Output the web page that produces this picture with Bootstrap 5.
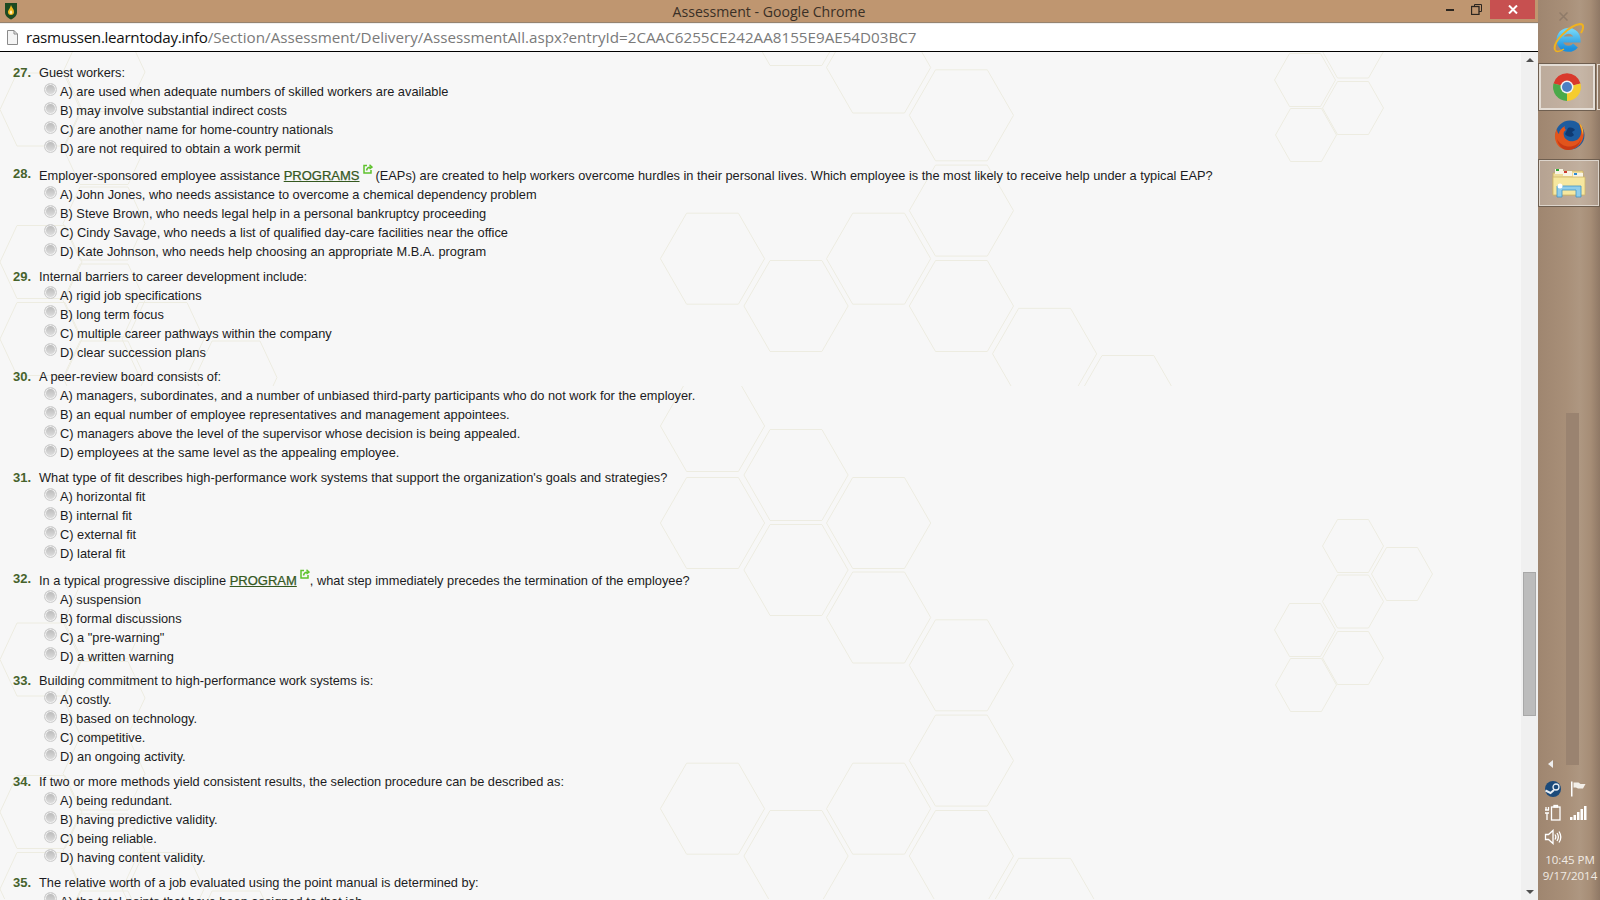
<!DOCTYPE html>
<html lang="en">
<head>
  <meta charset="UTF-8" />
  <title>Assessment - Google Chrome</title>
  <link href="https://cdn.jsdelivr.net/npm/bootstrap@5.3.2/dist/css/bootstrap.min.css" rel="stylesheet">
  <style>
    html, body { height: 100%; overflow: hidden; }
    body { background: #a68c75; font-family: "Liberation Sans", Arial, sans-serif; }

    .win-main { width: 1538px; height: 900px; }
    .title-strip {
      display: grid; grid-template-columns: 1fr auto 1fr; align-items: center;
      height: 23px; background: #bf9670; border-bottom: 1px solid #96836f;
      font-family: "Open Sans", sans-serif; font-size: 14.1px; color: #3a3026;
    }
    .title-text { padding-top: 1px; }
    .win-btn { width: 27px; height: 19px; }
    .win-close { width: 45px; height: 19px; background: #c75050; margin: 0 3px 3px 0; }
    .addr-strip {
      height: 30px; background: #fff; border-top: 1px solid #efefef; border-bottom: 1px solid #000;
      padding-left: 6px; font-family: "Open Sans", sans-serif; font-size: 15.2px; color: #7a7a7a;
    }
    .addr-doc { margin-right: 7px; }
    .addr-host { color: #111; letter-spacing: -.3px; }

    .sheet { background: #f7f7f7; }
    .hex-bg { position: absolute; left: 0; top: 0; }
    .q-list { position: relative; padding: 11px 0 0 13px; font-size: 12.8px; color: #1b1b22; line-height: 19px; white-space: nowrap; }
    .q-item { display: flex; margin-bottom: 5.67px; }
    .q-num { width: 26px; flex: none; font-size: 13px; font-weight: 700; color: #46632c; }
    .q-opt { display: flex; padding-left: 5px; height: 19px; }
    .q-radio {
      appearance: none; width: 13px; height: 13px; margin: 0 3px 0 0; flex: none; position: relative; top: .5px;
      border: 1px solid #cdcdcd; border-radius: 50%;
      background: linear-gradient(#b8b8b8, #e0e0e0);
      box-shadow: inset 0 0 0 1px #f0f0f0;
    }
    .term-link { color: #35581f; text-decoration: underline; font-size: 13px; -webkit-text-stroke: .25px #35581f; }
    .ext-ico { width: 10px; height: 10px; vertical-align: 6px; margin: 0 3px 0 3px; }
    .ext-tight { margin-right: 0; }

    .scroll-rail { width: 17px; background: #f0f0f0; }
    .scroll-up { border: 4px solid transparent; border-bottom: 4px solid #505050; border-top: 0; margin: 6px auto 0; width: 0; }
    .scroll-down { border: 4px solid transparent; border-top: 4px solid #505050; border-bottom: 0; margin: auto auto 6px; width: 0; }
    .scroll-thumb { width: 13px; height: 144px; margin: 510px 0 0 2px; background: #bcbcbc; border: 1px solid #a8a8a8; }

    .task-rail {
      width: 62px; height: 900px; color: #fff;
      background:
        linear-gradient(#9a8370, #9a8370) no-repeat 28px 413px / 13px 352px,
        linear-gradient(90deg, #9f8670 0, #a88f78 45%, #ae9781 68%, #a68d76 85%, #8f7865 100%);
      font-family: "Open Sans", sans-serif;
    }
    .task-slot { position: relative; display: flex; justify-content: center; align-items: center; }
    .task-ghost { height: 23px; padding: 9px 12px 0 0; }
    .task-ie { height: 41px; padding-bottom: 11px; }
    .task-on { height: 46px; width: 56px; margin-left: 1px; border: 2px solid #e4ddd5; outline: 1px solid #6f5f50; background: rgba(255,255,255,.3); }
    .task-ff { height: 50px; }
    .task-folder { height: 46px; width: 60px; margin-left: 1px; border: 1px solid #dcd4cb; outline: 1px solid #6f5f50; background: rgba(255,255,255,.24); }
    .sliver { position: absolute; left: 56px; top: -2px; width: 5px; height: 46px; border: 1px solid #e4ddd5; }
    .tray { margin-top: auto; padding: 0 0 16px 5px; }
    .tray-row { display: flex; gap: 7px; height: 24px; align-items: center; padding-left: 1px; }
    .tray-ico { width: 18px; height: 18px; }
    .tray-arrow { border: 4px solid transparent; border-right: 5px solid #eee; border-left: 0; width: 0; margin: 0 0 9px 5px; }
    .clock-text { font-size: 11.5px; line-height: 16px; text-align: center; margin: 3px 0 0 -3px; color: #f1ebe4; }
  </style>
</head>
<body class="d-flex">
  <div class="win-main d-flex flex-column">
    <div class="title-strip">
      <div class="ps-1 d-flex">
        <svg width="14" height="18" viewBox="0 0 14 18"><path d="M1 1h12v9c0 4-3 6-6 7.500C4 16 1 14 1 10z" fill="#1c4a22"/><path d="M7 3c1 3 3 4 3 7a3 3 0 0 1-6 0c0-2 2-3 3-7z" fill="#f1b81f"/><path d="M7 8c.5 1 1.300 1.500 1.300 2.600a1.300 1.300 0 0 1-2.600 0C5.700 9.600 6.500 9 7 8z" fill="#fff3c0"/></svg>
      </div>
      <div class="title-text">Assessment - Google Chrome</div>
      <div class="d-flex justify-content-end align-items-start">
        <div class="win-btn d-flex justify-content-center align-items-center">
          <svg width="10" height="4" viewBox="0 0 10 4"><rect x="1" y="1" width="8" height="2" fill="#2c2620"/></svg>
        </div>
        <div class="win-btn d-flex justify-content-center align-items-center">
          <svg width="11" height="11" viewBox="0 0 11 11" fill="none" stroke="#2c2620"><path d="M3.500 2.500V.5h7v7H8"/><rect x=".5" y="2.500" width="7.500" height="8" stroke-width="1.300"/></svg>
        </div>
        <div class="win-close d-flex justify-content-center align-items-center">
          <svg width="10" height="9" viewBox="0 0 10 9" stroke="#fff" stroke-width="2"><path d="M1 .5l8 8M9 .5l-8 8"/></svg>
        </div>
      </div>
    </div>
    <div class="addr-strip d-flex align-items-center">
      <svg class="addr-doc" width="13" height="15" viewBox="0 0 13 15" fill="#f4f4f4" stroke="#8a8a8a"><path d="M1.500.5h6.500l3.500 3.500v10.500h-10z"/><path d="M8 .5v3.500h3.500" fill="none"/></svg>
      <div><span class="addr-host">rasmussen.learntoday.info</span>/Section/Assessment/Delivery/AssessmentAll.aspx?entryId=2CAAC6255CE242AA8155E9AE54D03BC7</div>
    </div>
    <div class="d-flex flex-grow-1 overflow-hidden">
      <div class="sheet flex-grow-1 position-relative overflow-hidden">
        <svg class="hex-bg" width="1521" height="847" viewBox="0 53 1521 847" fill="none" stroke="#edecE1" stroke-width="1">
          <defs>
            <polygon id="hexA" points="-52.100,0 -25.900,-45.500 25.900,-45.500 52.100,0 25.900,45.500 -25.900,45.500"/>
            <polygon id="hexL" points="-41,0 -24,-36.500 24,-36.500 41,0 24,36.500 -24,36.500"/>
            <polygon id="hexS" points="-30.500,0 -15.500,-26.500 15.500,-26.500 30.500,0 15.500,26.500 -15.500,26.500"/>
            <pattern id="hexTile" patternUnits="userSpaceOnUse" x="0" y="-163" width="1521" height="550">
              <g transform="translate(0 164)">
                <use href="#hexL" x="41" y="109.500"/><use href="#hexL" x="41" y="262"/><use href="#hexL" x="41" y="339"/>
                <use href="#hexL" x="104" y="72"/><use href="#hexL" x="104" y="148"/><use href="#hexL" x="104" y="223.500"/>
                <use href="#hexL" x="104" y="300.500"/><use href="#hexL" x="104" y="377.500"/>
                <use href="#hexL" x="163" y="339"/><use href="#hexL" x="236" y="377.500"/>

                <use href="#hexA" x="712.500" y="-124"/><use href="#hexA" x="796" y="-75"/>
                <use href="#hexA" x="712.500" y="-27"/><use href="#hexA" x="878.600" y="-27"/>
                <use href="#hexA" x="796" y="20"/><use href="#hexA" x="878.600" y="67.500"/>
                <use href="#hexA" x="961.400" y="115.300"/><use href="#hexA" x="961.400" y="210.600"/>
                <use href="#hexA" x="712.500" y="258.700"/><use href="#hexA" x="878.600" y="258.700"/>
                <use href="#hexA" x="796" y="306"/><use href="#hexA" x="961.400" y="306"/>
                <use href="#hexA" x="1044.600" y="353.800"/><use href="#hexA" x="1127.900" y="401"/>

                <use href="#hexS" x="1353" y="-4"/><use href="#hexS" x="1402" y="24"/>
                <use href="#hexS" x="1353" y="51.500"/><use href="#hexS" x="1305" y="80"/>
                <use href="#hexS" x="1353" y="108"/><use href="#hexS" x="1306" y="135"/>
              </g>
            </pattern>
          </defs>
          <rect x="0" y="53" width="1521" height="847" fill="url(#hexTile)" stroke="none"/>
        </svg>

        <div class="q-list">
          <div class="q-item"><div class="q-num">27.</div><div>
            <div>Guest workers:</div>
            <div class="q-opt"><input type="radio" class="q-radio" name="q27"><span>A) are used when adequate numbers of skilled workers are available</span></div>
            <div class="q-opt"><input type="radio" class="q-radio" name="q27"><span>B) may involve substantial indirect costs</span></div>
            <div class="q-opt"><input type="radio" class="q-radio" name="q27"><span>C) are another name for home-country nationals</span></div>
            <div class="q-opt"><input type="radio" class="q-radio" name="q27"><span>D) are not required to obtain a work permit</span></div>
          </div></div>
          <div class="q-item"><div class="q-num">28.</div><div>
            <div>Employer-sponsored employee assistance <a class="term-link" href="#">PROGRAMS</a><svg class="ext-ico" viewBox="0 0 10 10" fill="none" stroke="#5fc22e" stroke-width="1.500"><path d="M4 1.500H1v7.500h7V6"/><path d="M3.500 6.500C4 4 5.500 3 8 3"/><path d="M6.500 .8L9 3 6.500 5" /></svg>(EAPs) are created to help workers overcome hurdles in their personal lives. Which employee is the most likely to receive help under a typical EAP?</div>
            <div class="q-opt"><input type="radio" class="q-radio" name="q28"><span>A) John Jones, who needs assistance to overcome a chemical dependency problem</span></div>
            <div class="q-opt"><input type="radio" class="q-radio" name="q28"><span>B) Steve Brown, who needs legal help in a personal bankruptcy proceeding</span></div>
            <div class="q-opt"><input type="radio" class="q-radio" name="q28"><span>C) Cindy Savage, who needs a list of qualified day-care facilities near the office</span></div>
            <div class="q-opt"><input type="radio" class="q-radio" name="q28"><span>D) Kate Johnson, who needs help choosing an appropriate M.B.A. program</span></div>
          </div></div>
          <div class="q-item"><div class="q-num">29.</div><div>
            <div>Internal barriers to career development include:</div>
            <div class="q-opt"><input type="radio" class="q-radio" name="q29"><span>A) rigid job specifications</span></div>
            <div class="q-opt"><input type="radio" class="q-radio" name="q29"><span>B) long term focus</span></div>
            <div class="q-opt"><input type="radio" class="q-radio" name="q29"><span>C) multiple career pathways within the company</span></div>
            <div class="q-opt"><input type="radio" class="q-radio" name="q29"><span>D) clear succession plans</span></div>
          </div></div>
          <div class="q-item"><div class="q-num">30.</div><div>
            <div>A peer-review board consists of:</div>
            <div class="q-opt"><input type="radio" class="q-radio" name="q30"><span>A) managers, subordinates, and a number of unbiased third-party participants who do not work for the employer.</span></div>
            <div class="q-opt"><input type="radio" class="q-radio" name="q30"><span>B) an equal number of employee representatives and management appointees.</span></div>
            <div class="q-opt"><input type="radio" class="q-radio" name="q30"><span>C) managers above the level of the supervisor whose decision is being appealed.</span></div>
            <div class="q-opt"><input type="radio" class="q-radio" name="q30"><span>D) employees at the same level as the appealing employee.</span></div>
          </div></div>
          <div class="q-item"><div class="q-num">31.</div><div>
            <div>What type of fit describes high-performance work systems that support the organization's goals and strategies?</div>
            <div class="q-opt"><input type="radio" class="q-radio" name="q31"><span>A) horizontal fit</span></div>
            <div class="q-opt"><input type="radio" class="q-radio" name="q31"><span>B) internal fit</span></div>
            <div class="q-opt"><input type="radio" class="q-radio" name="q31"><span>C) external fit</span></div>
            <div class="q-opt"><input type="radio" class="q-radio" name="q31"><span>D) lateral fit</span></div>
          </div></div>
          <div class="q-item"><div class="q-num">32.</div><div>
            <div>In a typical progressive discipline <a class="term-link" href="#">PROGRAM</a><svg class="ext-ico ext-tight" viewBox="0 0 10 10" fill="none" stroke="#5fc22e" stroke-width="1.500"><path d="M4 1.500H1v7.500h7V6"/><path d="M3.500 6.500C4 4 5.500 3 8 3"/><path d="M6.500 .8L9 3 6.500 5" /></svg>, what step immediately precedes the termination of the employee?</div>
            <div class="q-opt"><input type="radio" class="q-radio" name="q32"><span>A) suspension</span></div>
            <div class="q-opt"><input type="radio" class="q-radio" name="q32"><span>B) formal discussions</span></div>
            <div class="q-opt"><input type="radio" class="q-radio" name="q32"><span>C) a "pre-warning"</span></div>
            <div class="q-opt"><input type="radio" class="q-radio" name="q32"><span>D) a written warning</span></div>
          </div></div>
          <div class="q-item"><div class="q-num">33.</div><div>
            <div>Building commitment to high-performance work systems is:</div>
            <div class="q-opt"><input type="radio" class="q-radio" name="q33"><span>A) costly.</span></div>
            <div class="q-opt"><input type="radio" class="q-radio" name="q33"><span>B) based on technology.</span></div>
            <div class="q-opt"><input type="radio" class="q-radio" name="q33"><span>C) competitive.</span></div>
            <div class="q-opt"><input type="radio" class="q-radio" name="q33"><span>D) an ongoing activity.</span></div>
          </div></div>
          <div class="q-item"><div class="q-num">34.</div><div>
            <div>If two or more methods yield consistent results, the selection procedure can be described as:</div>
            <div class="q-opt"><input type="radio" class="q-radio" name="q34"><span>A) being redundant.</span></div>
            <div class="q-opt"><input type="radio" class="q-radio" name="q34"><span>B) having predictive validity.</span></div>
            <div class="q-opt"><input type="radio" class="q-radio" name="q34"><span>C) being reliable.</span></div>
            <div class="q-opt"><input type="radio" class="q-radio" name="q34"><span>D) having content validity.</span></div>
          </div></div>
          <div class="q-item"><div class="q-num">35.</div><div>
            <div>The relative worth of a job evaluated using the point manual is determined by:</div>
            <div class="q-opt"><input type="radio" class="q-radio" name="q35"><span>A) the total points that have been assigned to that job.</span></div>
          </div></div>
        </div>
      </div>
      <div class="scroll-rail d-flex flex-column">
        <div class="scroll-up"></div>
        <div class="scroll-thumb"></div>
        <div class="scroll-down"></div>
      </div>
    </div>
  </div>

  <div class="task-rail d-flex flex-column">
    <div class="task-slot task-ghost">
      <svg width="9" height="9" viewBox="0 0 9 9" stroke="#8f7b69" stroke-width="1.500"><path d="M.5.5l8 8M8.500.5l-8 8"/></svg>
    </div>
    <div class="task-slot task-ie">
      <svg width="32" height="32" viewBox="0 0 32 32" fill="none">
        <defs><linearGradient id="ieBlue" x1="0" y1="0" x2="0" y2="1"><stop offset="0" stop-color="#6fd3f7"/><stop offset="1" stop-color="#1c8fdc"/></linearGradient></defs>
        <path d="M7.500 17.500h17A9 9 0 1 0 22.500 23.500" stroke="url(#ieBlue)" stroke-width="6"/>
        <path d="M2 28C-1 20 17 3 27 2c4.500 0 3.500 5 1 9" stroke="#efb220" stroke-width="2"/>
        <path d="M2 28c2 3 6 1 9-1" stroke="#efb220" stroke-width="1.500"/>
      </svg>
    </div>
    <div class="task-slot task-on">
      <svg width="28" height="28" viewBox="0 0 28 28">
        <path d="M14 14L.5 10.500A14 14 0 0 1 27.500 10.500z" fill="#d9392c"/>
        <path d="M14 14L27.500 10.500A14 14 0 0 1 14 28z" fill="#f6cc2e"/>
        <path d="M14 14L14 28A14 14 0 0 1 .5 10.500z" fill="#4aa94a"/>
        <circle cx="14" cy="14" r="6.500" fill="#f2f2f2"/><circle cx="14" cy="14" r="5" fill="#4b7fc4"/>
      </svg>
      <div class="sliver"></div>
    </div>
    <div class="task-slot task-ff">
      <svg width="31" height="31" viewBox="0 0 31 31">
        <circle cx="16" cy="15" r="14.500" fill="#1d5c9f"/>
        <path d="M14 8c3-1 6 0 7 2l-3 2 2 3c-2 3-7 2-9-1z" fill="#0f3a72"/>
        <path d="M25 3c5 5 6 12 3 18C24 29 14 32 7 28 1 24-1 15 3 9c0 3 1 4 2 5 0-3 2-6 6-8-1 2 0 3 1 4-2 1-3 3-2 6 1 4 6 6 10 5 5-1 8-6 7-11-.5-2-1-4-2-7z" fill="#e2541c"/>
        <path d="M3 19c3 6 10 9 16 7 4-1 7-4 8-8-1 8-7 12-13 12-6 0-10-5-11-11z" fill="#c93a14"/>
        <path d="M25 3c3 2 5 7 4 12-1-4-2-8-4-12z" fill="#f6b62c"/>
      </svg>
    </div>
    <div class="task-slot task-folder">
      <svg width="34" height="30" viewBox="0 0 34 30">
        <path d="M1 5h8l2-2h20v24H1z" fill="#efdc9a" stroke="#c9ad62" stroke-width=".8"/>
        <rect x="3" y="1" width="8" height="5" fill="#f8f4e4"/><rect x="4" y="1" width="3" height="2" fill="#2fa52f"/>
        <rect x="11" y="3" width="9" height="5" fill="#f8f4e4"/><rect x="12" y="3" width="3" height="2" fill="#cc3b2e"/>
        <rect x="21" y="5" width="10" height="5" fill="#f8f4e4"/><rect x="22" y="5" width="3" height="2" fill="#2c8ad4"/>
        <path d="M1 9h32v18H1z" fill="#f6e79f" stroke="#cfb56a" stroke-width=".8"/>
        <path d="M5 29V18h24v11h-5v-7H10v7z" fill="#8fcdea" stroke="#3f94c8" stroke-width=".8"/>
        <circle cx="8" cy="18" r="2.500" fill="#fff"/>
      </svg>
    </div>

    <div class="tray">
      <div class="tray-arrow"></div>
      <div class="tray-row">
        <svg class="tray-ico" viewBox="0 0 18 18"><circle cx="9" cy="9" r="8" fill="#1b4a7a"/><circle cx="12" cy="7" r="3" fill="none" stroke="#e8eef4" stroke-width="1.300"/><path d="M1.500 10.500l5 2.500 3.500-3" stroke="#e8eef4" stroke-width="2" fill="none"/></svg>
        <svg class="tray-ico" viewBox="0 0 18 18" fill="#fff"><rect x="2" y="1.500" width="1.500" height="15"/><path d="M4.500 2.500h5l2 1.500h5l-2.500 4.500h-5l-2-1h-2.500z" fill="#f3efe9"/></svg>
      </div>
      <div class="tray-row">
        <svg class="tray-ico" viewBox="0 0 18 18" fill="none" stroke="#fff" stroke-width="1.300"><path d="M1 6h4M1 9h4M3 9v7M2 3v3M4.500 3v3"/><rect x="7.500" y="3" width="8.500" height="13"/><rect x="10" y="1.500" width="3.500" height="1.500"/></svg>
        <svg class="tray-ico" viewBox="0 0 18 18" fill="#fff"><rect x="1" y="13" width="2.500" height="3"/><rect x="4.500" y="11" width="2.500" height="5"/><rect x="8" y="8" width="2.500" height="8"/><path d="M11.500 5H14v11h-2.500zM15 2h2.500v14H15z"/></svg>
      </div>
      <div class="tray-row">
        <svg class="tray-ico" viewBox="0 0 18 18" fill="none" stroke="#fff" stroke-width="1.300"><path d="M1.500 6.500h3L9 2.500v13l-4.500-4h-3z"/><path d="M11 6.500c1 1.500 1 3.500 0 5M13 5c1.700 2.500 1.700 5.500 0 8M15 3.500c2.300 3.500 2.300 7.500 0 11"/></svg>
      </div>
      <div class="clock-text">10:45 PM<br>9/17/2014</div>
    </div>
  </div>
  <script src="https://cdn.jsdelivr.net/npm/bootstrap@5.3.2/dist/js/bootstrap.bundle.min.js"></script>
</body>
</html>
